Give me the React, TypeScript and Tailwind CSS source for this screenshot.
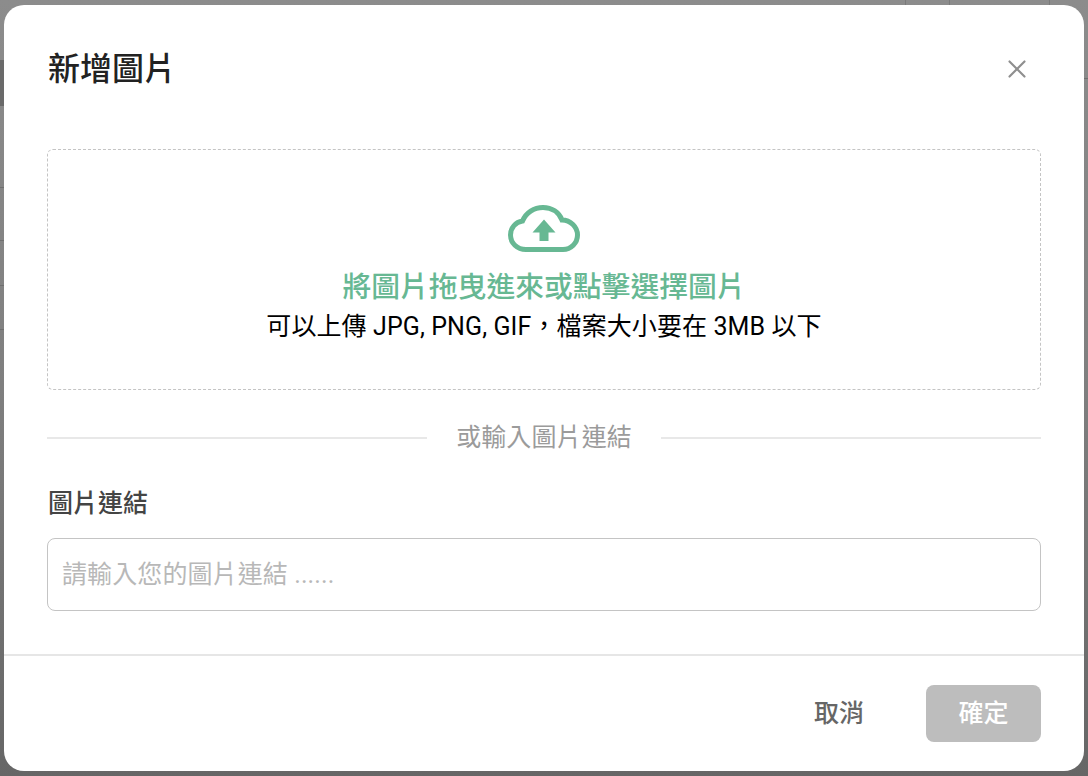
import React from 'react';
import { X } from 'lucide-react';

const App: React.FC = () => {
  return (
    <div
      className="relative flex h-[776px] w-[1088px] items-center justify-center overflow-hidden bg-gradient-to-b from-[#8c8c8c] via-[#7f7f7f] to-[#666666]"
      style={{ fontFamily: 'Roboto, "Noto Sans CJK TC", sans-serif' }}
    >
      {/* page behind the overlay, only its edges show */}
      <div className="absolute left-0 top-[60px] h-[46px] w-[4px] bg-[#6a6a6a]" />
      <div className="absolute left-0 top-[187px] h-px w-[4px] bg-[#6f6f6f]" />
      <div className="absolute left-0 top-[240px] h-px w-[4px] bg-[#6f6f6f]" />
      <div className="absolute left-0 top-[285px] h-px w-[4px] bg-[#6f6f6f]" />
      <div className="absolute left-0 top-[329px] h-px w-[4px] bg-[#6f6f6f]" />
      <div className="absolute right-0 top-[78px] h-px w-[4px] bg-[#6f6f6f]" />
      <div className="absolute left-[905px] top-0 h-[5px] w-px bg-[#7a7a7a]" />
      <div className="absolute left-[949px] top-0 h-[5px] w-px bg-[#7a7a7a]" />
      <div className="absolute left-[1049px] top-0 h-[5px] w-px bg-[#7a7a7a]" />

      <div className="relative flex h-[766px] w-[1080px] flex-col rounded-[20px] bg-white">
        <div className="flex h-[144px] shrink-0 items-start justify-between pl-[44px] pr-[52px] pt-[42px]">
          <h2 className="text-[32px] leading-[44px] font-medium text-[#222222]">新增圖片</h2>
          <button className="mt-[7px] text-[#8f8f8f]"><X size={30} strokeWidth={1.7} /></button>
        </div>

        <div className="flex flex-1 flex-col px-[43px]">
          <div className="flex h-[241px] flex-col items-center rounded-[6px] border border-dashed border-[#c4c4c4] pt-[54px]">
            <svg width="72" height="48" viewBox="0 0 72 48" fill="none">
              <path
                d="M18 45.500C9 45.500 2.500 39 2.500 31C2.500 24 7.500 18 14.500 17C18 8.500 26 3.500 35 3.500C44 3.500 51 8.500 54 16C62.500 16 69.500 23 69.500 31C69.500 39 63 45.500 55 45.500Z"
                stroke="#67b893"
                strokeWidth="5"
              />
              <path d="M36 15.500L47.500 28.500H40.500V37H31.500V28.500H24.500Z" fill="#67b893" />
            </svg>
            <p className="mt-[15px] text-[28.8px] leading-[40px] font-medium text-[#67b893]">將圖片拖曳進來或點擊選擇圖片</p>
            <p className="mt-[2px] text-[25px] leading-[36px] tracking-[0.1px] text-black">可以上傳 JPG, PNG, GIF，檔案大小要在 3MB 以下</p>
          </div>

          <div className="mt-[26px] flex h-[44px] items-center gap-[29px]">
            <div className="h-[2px] flex-1 bg-[#e8e8e8]" />
            <span className="text-[25px] leading-[36px] tracking-[0.1px] text-[#9b9b9b]">或輸入圖片連結</span>
            <div className="h-[2px] flex-1 bg-[#e8e8e8]" />
          </div>

          <label className="mt-[26px] pl-px text-[25px] leading-[36px] font-medium text-[#444444]">圖片連結</label>
          <input
            className="mt-[16px] h-[73px] rounded-[8px] border border-[#c4c4c4] px-[14px] text-[25px] tracking-[0.1px] outline-none placeholder:text-[#b8b8b8]"
            placeholder="請輸入您的圖片連結 ......"
          />
        </div>

        <div className="flex h-[117px] shrink-0 items-center justify-end gap-[62px] border-t-2 border-[#e6e6e6] pr-[43px]">
          <button className="text-[25px] font-medium text-[#666666]">取消</button>
          <button className="h-[57px] w-[115px] rounded-[8px] bg-[#bdbdbd] text-[25px] font-medium text-white">確定</button>
        </div>
      </div>
    </div>
  );
};

export default App;
